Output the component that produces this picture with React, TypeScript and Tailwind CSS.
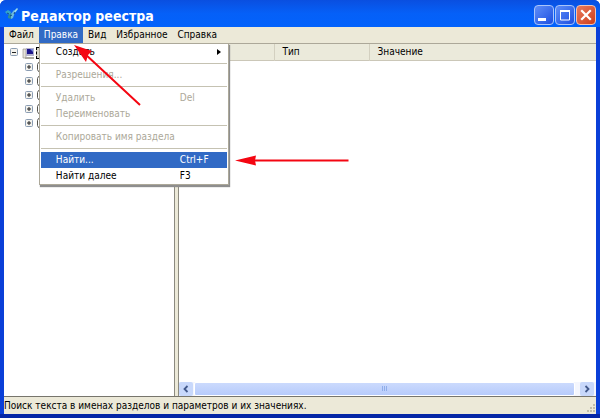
import { useState } from 'react';
import clsx from 'clsx';

interface MenuItem {
  label: string;
  shortcut?: string;
  submenu?: boolean;
  disabled?: boolean;
  separator?: boolean;
}

const MENUS = ['Файл', 'Правка', 'Вид', 'Избранное', 'Справка'];

const EDIT_ITEMS: MenuItem[] = [
  { label: 'Создать', submenu: true, separator: true },
  { label: 'Разрешения...', disabled: true, separator: true },
  { label: 'Удалить', shortcut: 'Del', disabled: true },
  { label: 'Переименовать', disabled: true, separator: true },
  { label: 'Копировать имя раздела', disabled: true, separator: true },
  { label: 'Найти...', shortcut: 'Ctrl+F' },
  { label: 'Найти далее', shortcut: 'F3' },
];

const AppIcon = () => (
  <svg className="h-4 w-4 shrink-0" viewBox="0 0 16 16">
    <path d="M1 6l3-2 3 2-1 3-3-1z" fill="#35a5c9" />
    <path d="M4 10l3-3 2 2-2 4-3-1z" fill="#2f8f96" />
    <path d="M7 8l3-4 1 2-2 6-2 1z" fill="#6cb8dc" />
    <path d="M10 5l3-3 1 1-3 4z" fill="#9edbe8" />
    <path d="M3 7l2 1M6 10l2-1M10 8l1-2" stroke="#11458c" />
  </svg>
);

const TitleBar = () => (
  <header className="flex h-[27px] shrink-0 items-center bg-linear-to-b from-[#0a4fe0] via-[#0560f8] to-[#0262fc] px-1">
    <AppIcon />
    <h1 className="ml-px grow pt-1 text-[14px] leading-5 font-bold text-white">
      Редактор реестра
    </h1>
    <div className="flex gap-px pt-0.5">
      <button
        aria-label="Свернуть"
        className="h-5 w-5 rounded-sm border border-[#a9c4fa] bg-linear-to-br from-[#5f8df8] to-[#1e4de0]"
      >
        <svg viewBox="0 0 18 18" className="h-full w-full">
          <path d="M3 12h8v3H3z" fill="#fff" />
        </svg>
      </button>
      <button
        aria-label="Развернуть"
        className="h-5 w-5 rounded-sm border border-[#a9c4fa] bg-linear-to-br from-[#5f8df8] to-[#1e4de0]"
      >
        <svg viewBox="0 0 18 18" className="h-full w-full">
          <path d="M4.500 5h9v9h-9z" fill="none" stroke="#fff" />
          <path d="M4 4h10v2H4z" fill="#fff" />
        </svg>
      </button>
      <button
        aria-label="Закрыть"
        className="h-5 w-5 rounded-sm border border-[#f3c3b4] bg-linear-to-br from-[#e8795c] to-[#cf3d14]"
      >
        <svg viewBox="0 0 18 18" className="h-full w-full">
          <path d="M5 5l8 8M13 5l-8 8" stroke="#fff" strokeWidth="2.200" strokeLinecap="square" />
        </svg>
      </button>
    </div>
  </header>
);

const EditMenu = () => (
  <div
    role="menu"
    className="absolute left-0 top-full z-10 w-[190px] border border-[#aca899] bg-white shadow-[1px_2px_1px_#8e8e8e]"
  >
    {EDIT_ITEMS.map((item) => (
      <div key={item.label} className="px-px">
        <button
          role="menuitem"
          disabled={item.disabled}
          className={clsx(
            'flex h-4 w-full items-center pl-[15px] text-left whitespace-nowrap',
            item.disabled && 'text-[#aca899]',
            item.label === 'Найти...' && 'bg-[#316ac5] text-white'
          )}
        >
          <span className="grow">{item.label}</span>
          {item.shortcut && <span className="w-[47px]">{item.shortcut}</span>}
          {item.submenu && (
            <svg className="mr-1.5 h-2 w-1" viewBox="0 0 4 8">
              <path d="M0 1l4 3-4 3z" fill="#000" />
            </svg>
          )}
        </button>
        {item.separator && <hr className="my-[3px] border-[#c5c2b2]" />}
      </div>
    ))}
  </div>
);

const Expander = ({ open }: { open?: boolean }) => (
  <svg className="h-[9px] w-[9px] shrink-0" viewBox="0 0 9 9">
    <rect x=".5" y=".5" width="7" height="7" rx="1" fill="#f4f3ee" stroke="#8b9db3" />
    <path d={open ? 'M2 4.500h4' : 'M2 4h4M4 2v4'} stroke="#222" />
  </svg>
);

const Tree = () => (
  <div className="w-[171px] shrink-0 border-r border-[#8c8a80] bg-white pl-1.5 pt-px">
    <div className="flex h-[15px] items-center">
      <Expander open />
      <svg className="ml-[3px] h-3 w-3" viewBox="0 0 12 12">
        <path d="M1 2h3v9H1z" fill="#e5e2da" stroke="#8a887e" strokeWidth=".6" />
        <path d="M4 1h8v8H4z" fill="#b3b1cc" />
        <path d="M5 2h6v5H5z" fill="#1c168c" />
        <path d="M8 2h3v3z" fill="#7388dd" />
        <path d="M3 10h9v2H3z" fill="#aaa89e" />
      </svg>
      <span className="ml-0.5 h-3 w-16 border border-dashed border-black bg-[#d8d5c8]" />
    </div>
    {[1, 2, 3, 4, 5].map((row) => (
      <div key={row} className="flex h-[14px] items-center pl-[15px]">
        <Expander />
        <svg className="ml-0.5 h-[10px] w-3" viewBox="0 0 12 10">
          <path d="M2.500 .5h3l1 1h5v8h-9l-1-2v-5z" fill="#fff" stroke="#55534c" />
        </svg>
      </div>
    ))}
  </div>
);

const ScrollBar = () => (
  <div className="flex h-[14px] shrink-0 bg-[#f4f6fd]">
    <button aria-label="Влево" className="flex w-[14px] items-center justify-center rounded-xs bg-[#c8d8fb]">
      <svg className="h-2 w-2" viewBox="0 0 8 8">
        <path d="M5.500 1L2.500 4l3 3" fill="none" stroke="#42598b" strokeWidth="1.800" />
      </svg>
    </button>
    <div className="mx-px flex grow items-center justify-center rounded-xs border border-white bg-linear-to-b from-[#cbdafd] to-[#b7cbfb]">
      <svg className="h-1.5 w-2" viewBox="0 0 8 6">
        <path d="M1.500 0v5M3.500 0v5M5.500 0v5" stroke="#90aeea" />
      </svg>
    </div>
    <button aria-label="Вправо" className="ml-1 mr-0.5 flex w-[14px] items-center justify-center rounded-xs bg-[#c8d8fb]">
      <svg className="h-2 w-2" viewBox="0 0 8 8">
        <path d="M2.500 1l3 3-3 3" fill="none" stroke="#42598b" strokeWidth="1.800" />
      </svg>
    </button>
  </div>
);

const Arrows = () => (
  <svg className="pointer-events-none absolute left-0 top-0 z-20 h-[200px] w-[360px]" viewBox="0 0 360 200">
    <path d="M140 105L84 53M348.500 160.500H250" stroke="#f40612" strokeWidth="2" />
    <path d="M74 45l18 6-4 4-2 7z" fill="#f40612" />
    <path d="M235 160.500l21-5-1 5 1 5z" fill="#f40612" />
  </svg>
);

const App = () => {
  const [openMenu, setOpenMenu] = useState('Правка');

  return (
    <div className="relative flex h-screen flex-col overflow-hidden rounded-t-md border-b-4 border-[#0426a6] bg-[#0a3fd8] font-['DejaVu_Sans_Condensed','Noto_Sans',sans-serif] text-[10px] leading-4 text-black">
      <TitleBar />
      <div className="mx-1 flex grow flex-col bg-[#ece9d8]">
        <nav className="flex h-4 shrink-0">
          {MENUS.map((name) => (
            <div key={name} className="relative">
              <button
                onClick={() => setOpenMenu(openMenu === name ? '' : name)}
                className={clsx('block h-4 px-[5px]', openMenu === name && 'bg-[#316ac5] text-white')}
              >
                {name}
              </button>
              {name === 'Правка' && openMenu === name && <EditMenu />}
            </div>
          ))}
        </nav>

        <main className="flex grow border-y border-[#aca899] border-b-[#77756c]">
          <Tree />
          <div className="w-[3px] shrink-0 bg-[#ece9d8]" />
          <section className="flex min-w-0 grow flex-col border-l border-[#8c8a80] bg-white">
            <table className="w-full table-fixed">
              <thead>
                <tr className="h-4 border-b border-[#cbc7b8] bg-[#ebeadb] text-left">
                  <th className="w-[95px] border-r border-[#d3d0c0] pl-2 font-normal">Имя</th>
                  <th className="w-[95px] border-r border-[#d3d0c0] pl-2 font-normal">Тип</th>
                  <th className="pl-2 font-normal">Значение</th>
                </tr>
              </thead>
            </table>
            <div className="grow" />
            <ScrollBar />
          </section>
        </main>

        <footer className="flex h-[17px] shrink-0 items-center justify-between">
          <span>Поиск текста в именах разделов и параметров и их значениях.</span>
          <svg className="h-3 w-3 self-end" viewBox="0 0 12 12">
            <path d="M9 2h2v2H9zM6 5h2v2H6zM9 5h2v2H9zM3 8h2v2H3zM6 8h2v2H6zM9 8h2v2H9z" fill="#c1bda9" />
          </svg>
        </footer>
      </div>
      <Arrows />
    </div>
  );
};

export default App;
